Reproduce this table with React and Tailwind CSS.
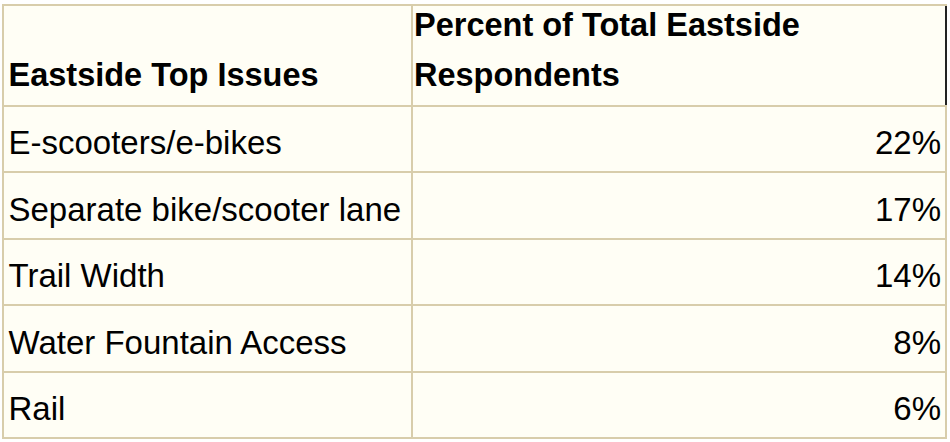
export default function App() {
  const rows = [
    ["E-scooters/e-bikes", "22%"],
    ["Separate bike/scooter lane", "17%"],
    ["Trail Width", "14%"],
    ["Water Fountain Access", "8%"],
    ["Rail", "6%"],
  ];
  return (
    <div
      className="w-[950px] h-[442px] bg-white pt-[4px] pl-[2px]"
      style={{ fontFamily: '"Liberation Sans", Arial, sans-serif' }}
    >
      <div className="w-[945px] border-2 border-[#d8cdab] bg-[#fffef5] text-[33px] text-black">
        <div className="grid grid-cols-[409px_1fr] h-[101px] border-b-2 border-[#d8cdab] text-[32.5px] font-bold leading-[50px]">
          <div className="border-r-2 border-[#d8cdab] pl-[4.5px] pt-[44px]">
            Eastside Top Issues
          </div>
          <div className="pl-[1px] border-r-2 border-[#222] -mr-[2px]">
            <div className="-mt-[6px]">
              Percent of Total Eastside
              <br />
              Respondents
            </div>
          </div>
        </div>
        {rows.map(([label, pct], i) => (
          <div
            key={label}
            className={
              i < rows.length - 1
                ? "grid grid-cols-[409px_1fr] h-[66.4px] border-b-2 border-[#d8cdab]"
                : "grid grid-cols-[409px_1fr] h-[64.4px]"
            }
          >
            <div className="border-r-2 border-[#d8cdab] flex items-end pl-[4.5px] pb-[12px] leading-none">
              {label}
            </div>
            <div className="flex items-end justify-end pr-[4px] pb-[12px] leading-none">
              {pct}
            </div>
          </div>
        ))}
      </div>
    </div>
  );
}
